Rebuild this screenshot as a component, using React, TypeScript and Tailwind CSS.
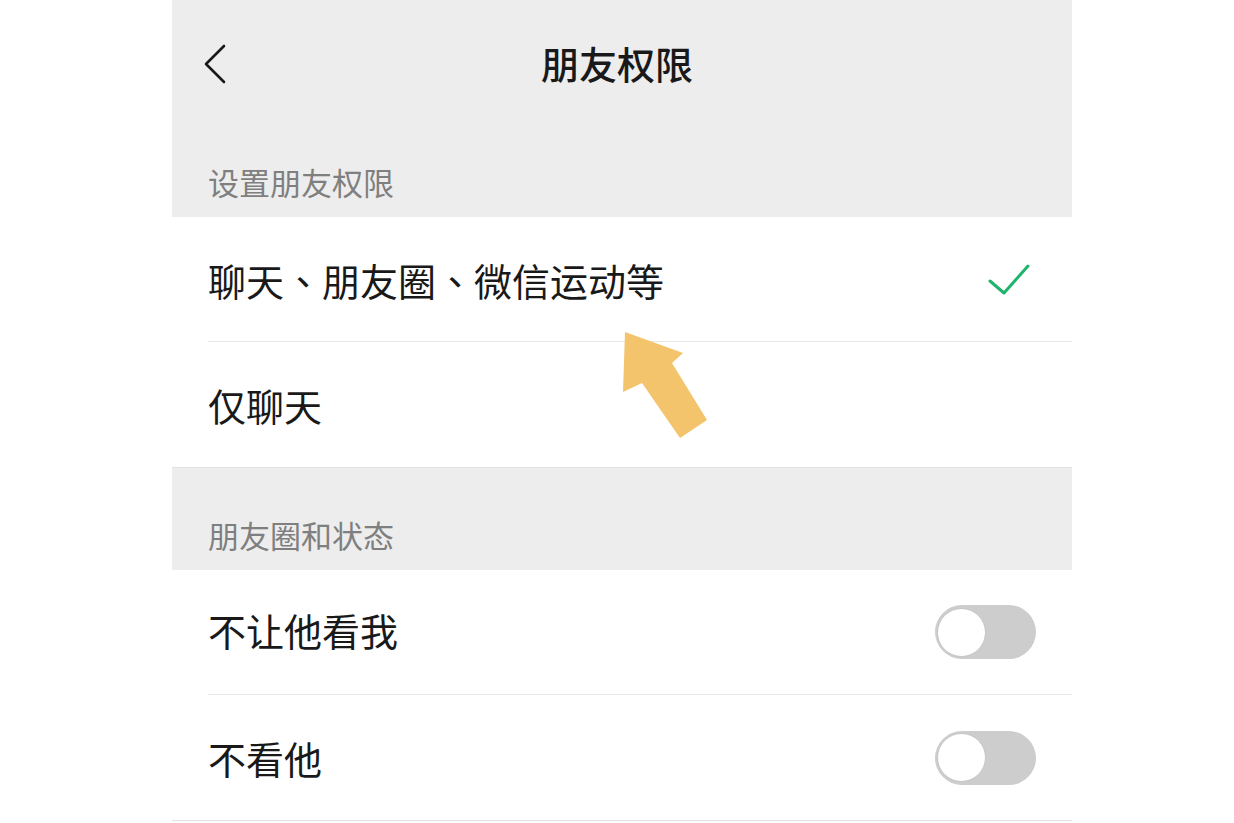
import React from "react";

const font = { fontFamily: '"Noto Sans CJK SC", "Noto Sans", sans-serif' };

function Toggle() {
  return (
    <div className="w-[101px] h-[54px] rounded-full bg-[#cdcdcd] flex items-center pl-[2px]">
      <div className="w-[49px] h-[49px] rounded-full bg-white border border-[#c4c4c4]" />
    </div>
  );
}

function Row({
  children,
  divider,
  right,
  pad,
}: {
  children: React.ReactNode;
  divider: boolean;
  right?: React.ReactNode;
  pad: string;
}) {
  return (
    <div className="bg-white pl-[36px]">
      <div
        className={
          "h-[125px] flex items-center justify-between " +
          (divider ? "border-b border-[#e6e6e6]" : "")
        }
      >
        <span className={"text-[38px] leading-none text-[#191919] " + pad}>{children}</span>
        {right}
      </div>
    </div>
  );
}

const Comma = () => (
  <span style={{ fontFamily: '"Noto Sans CJK TC", "Noto Sans CJK SC", sans-serif' }}>、</span>
);

export default function App() {
  return (
    <div className="min-h-[823px] w-full bg-white" style={font}>
      <div className="relative ml-[172px] w-[900px]">
        <div className="bg-[#ededed] h-[217px] flex flex-col">
          <div className="h-[128px] flex items-center pl-[32px]">
            <svg width="24" height="40" viewBox="0 0 24 40" className="shrink-0">
              <polyline
                points="20,2 2,20 20,38"
                fill="none"
                stroke="#1a1a1a"
                strokeWidth="2.6"
                strokeLinecap="round"
                strokeLinejoin="round"
              />
            </svg>
            <div className="flex-1 text-center pr-[66px]">
              <span className="text-[38px] leading-none font-medium text-[#191919]">
                朋友权限
              </span>
            </div>
          </div>
          <div className="h-[89px] flex items-center pl-[36px] pt-[17px]">
            <span className="text-[31px] leading-none text-[#7f7f7f]">设置朋友权限</span>
          </div>
        </div>

        <Row
          divider
          pad="pt-[1px]"
          right={
            <svg width="44" height="32" viewBox="0 0 44 32" className="mr-[41px]">
              <polyline
                points="3,18 17,30 41,3"
                fill="none"
                stroke="#1fb46b"
                strokeWidth="3"
                strokeLinecap="round"
                strokeLinejoin="round"
              />
            </svg>
          }
        >
          聊天<Comma />朋友圈<Comma />微信运动等
        </Row>
        <Row divider={false} pad="pt-[1px]">
          仅聊天
        </Row>
        <div className="border-t border-[#e3e3e3]" />

        <div className="bg-[#ededed] h-[102px] flex items-center pl-[36px] pt-[30px]">
          <span className="text-[31px] leading-none text-[#7f7f7f]">朋友圈和状态</span>
        </div>

        <Row
          divider
          pad="pb-[4px]"
          right={
            <div className="mr-[36px]">
              <Toggle />
            </div>
          }
        >
          不让他看我
        </Row>
        <Row
          divider={false}
          pad="pt-[1px]"
          right={
            <div className="mr-[36px]">
              <Toggle />
            </div>
          }
        >
          不看他
        </Row>
        <div className="border-t border-[#e3e3e3]" />

        <svg
          width="92"
          height="114"
          viewBox="0 0 92 114"
          className="absolute left-[448px] top-[328px]"
        >
          <polygon points="5,4 63,25 52,35 87,92 60,110 22,55 3,64" fill="#f3c46b" />
        </svg>
      </div>
    </div>
  );
}
